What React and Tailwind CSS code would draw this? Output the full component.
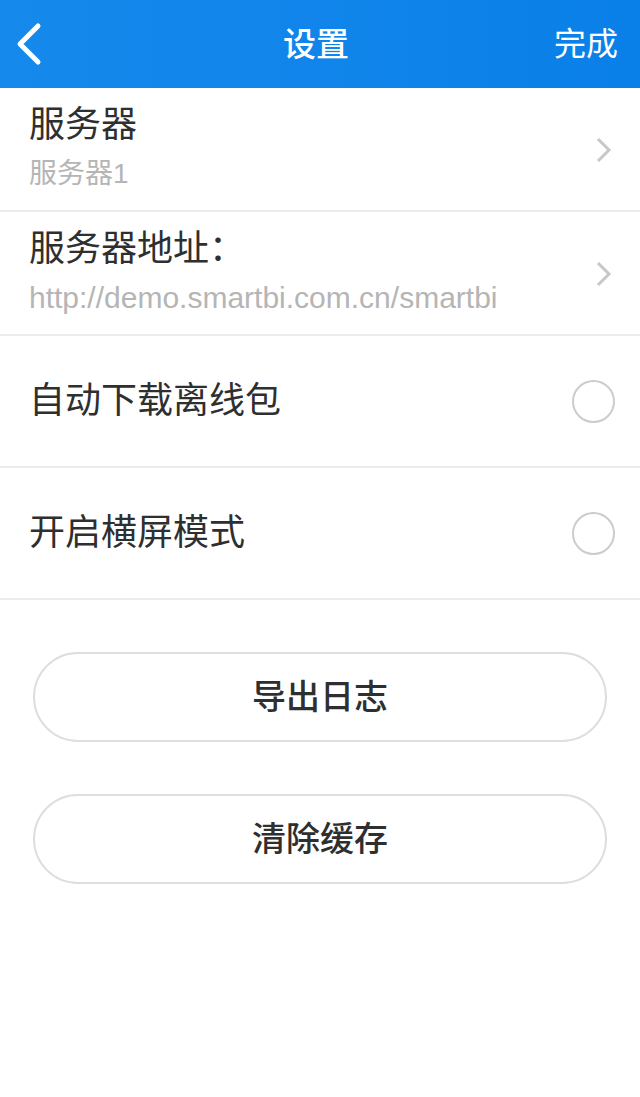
import React from 'react';

const cjk = { fontFamily: '"Liberation Sans", "Noto Sans CJK SC", sans-serif' };

function Chevron() {
  return (
    <svg width="20" height="28" viewBox="0 0 20 28" fill="none">
      <path d="M4 3 L15 14 L4 25" stroke="#c7c7c7" strokeWidth="3" />
    </svg>
  );
}

function LinkRow({ title, sub, subSize }) {
  return (
    <div className="flex h-[124px] items-start justify-between border-b-2 border-[#ececec] pl-[29px] pr-[26px]">
      <div className="pt-[17px]">
        <p className="text-[36px] leading-[40px] text-[#2f2f2f]">{title}</p>
        <p className={`mt-[12px] leading-[34px] text-[#b5b5b5] ${subSize}`}>{sub}</p>
      </div>
      <div className="pt-[48px]">
        <Chevron />
      </div>
    </div>
  );
}

function ToggleRow({ label }) {
  return (
    <div className="flex h-[132px] items-center justify-between border-b-2 border-[#ececec] pl-[29px] pr-[25px]">
      <p className="text-[36px] leading-[40px] text-[#2f2f2f]">{label}</p>
      <div className="h-[43px] w-[43px] rounded-full border-2 border-[#cccccc]" />
    </div>
  );
}

export default function App() {
  return (
    <div className="min-h-[1097px] w-[640px] bg-white" style={cjk}>
      {/* Header */}
      <div className="grid h-[88px] grid-cols-[1fr_auto_1fr] items-center bg-gradient-to-r from-[#1689ec] to-[#0980e8] pl-[14px] pr-[22px] text-white">
        <svg width="32" height="44" viewBox="0 0 32 44" fill="none">
          <path d="M24 4 L6 22 L24 40" stroke="#ffffff" strokeWidth="5" strokeLinecap="round" strokeLinejoin="round" />
        </svg>
        <h1 className="text-[33px] font-medium leading-none">设置</h1>
        <span className="justify-self-end text-[32px] leading-none">完成</span>
      </div>

      <LinkRow title="服务器" sub="服务器1" subSize="text-[28px]" />
      <LinkRow title="服务器地址：" sub="http://demo.smartbi.com.cn/smartbi" subSize="text-[30px]" />
      <ToggleRow label="自动下载离线包" />
      <ToggleRow label="开启横屏模式" />

      {/* Actions */}
      <div className="flex flex-col gap-[52px] px-[33px] pt-[52px]">
        <button className="h-[90px] rounded-full border-2 border-[#dedede] bg-white text-[34px] font-medium text-[#2f2f2f]">
          导出日志
        </button>
        <button className="h-[90px] rounded-full border-2 border-[#dedede] bg-white text-[34px] font-medium text-[#2f2f2f]">
          清除缓存
        </button>
      </div>
    </div>
  );
}
